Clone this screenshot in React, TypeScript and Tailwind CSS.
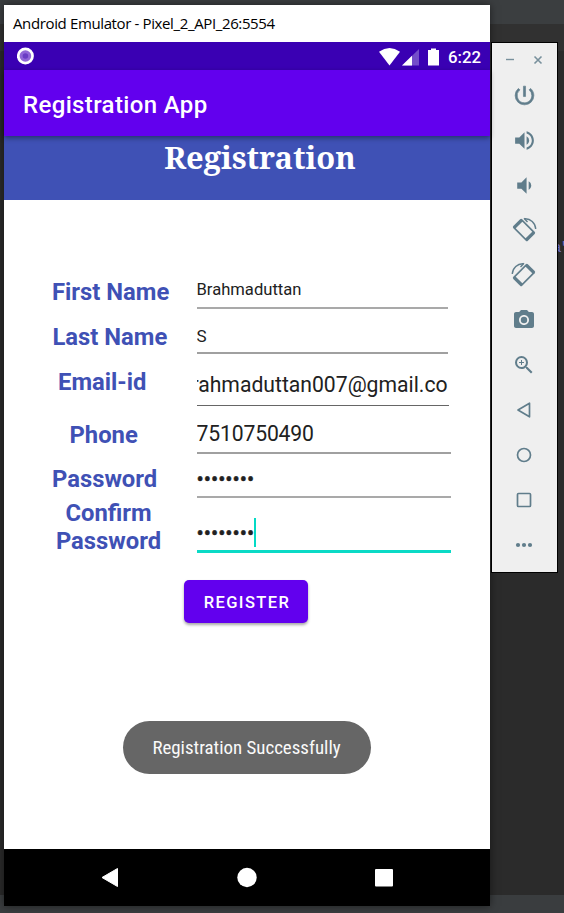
import type { ReactNode } from "react";
import {
  MdPowerSettingsNew,
  MdVolumeUp,
  MdVolumeDown,
  MdCameraAlt,
  MdZoomIn,
} from "react-icons/md";

const BULLETS = "••••••••";

function StatusBar() {
  return (
    <div className="flex h-7 items-center bg-[#3a00b3] pr-[9px] pl-[13px] text-white">
      <svg width="18" height="18" viewBox="0 0 18 18">
        <circle cx="8.400" cy="9" r="8.500" fill="#fff" />
        <circle cx="8.400" cy="9" r="5.800" fill="#9166d8" />
        <circle cx="8.400" cy="9" r="2.800" fill="#6a3cc4" />
      </svg>
      <svg width="62" height="20" viewBox="0 0 62 20" className="mt-px ml-auto">
        <path d="M0 4.8Q10.5 -2.6 21 4.8L10.5 18.5Z" fill="#fff" />
        <path d="M40 2V18.5H23Z" fill="#744dca" />
        <path d="M33 8.8V18.5H23Z" fill="#fff" />
        <path d="M49 3h3V1.5h5V3h3v15.500h-11Z" fill="#fff" />
      </svg>
      <span className="mt-px ml-[7px] w-[33px] text-[16.800px] leading-5 font-medium whitespace-nowrap">
        6:22
      </span>
    </div>
  );
}

type RowProps = {
  row: string;
  label: string;
  labelClass: string;
  line: string;
  children: ReactNode;
};

function Row({ row, label, labelClass, line, children }: RowProps) {
  return (
    <div className={`flex ${row}`}>
      <div className="w-[192.500px] shrink-0">
        <div className={`text-[23.800px] leading-7 font-bold text-[#3f51b5] ${labelClass}`}>{label}</div>
      </div>
      <div className={`flex overflow-hidden whitespace-nowrap text-[#212121] leading-7 ${line}`}>
        {children}
      </div>
    </div>
  );
}

function RotateIcon({ flip = false }: { flip?: boolean }) {
  return (
    <svg width="26" height="26" viewBox="-13 -13 26 26" className={flip ? "-scale-x-100" : ""}>
      <g transform="rotate(45)">
        <rect x="-10.300" y="-6.300" width="20.600" height="12.600" rx="1.500" fill="#607d8b" />
        <rect x="-7" y="-4.700" width="14" height="9.400" fill="#efefef" />
      </g>
      <path d="M0.500 -11.200C6.500 -11.700 11.400 -7 11.700 -1" fill="none" stroke="#607d8b" strokeWidth="1.400" />
      <path d="M0 -11.700L3.500 -8" fill="none" stroke="#607d8b" strokeWidth="1.400" />
    </svg>
  );
}

function Toolbar() {
  const icons: ReactNode[] = [
    <MdPowerSettingsNew size={25} className="stroke-[#607d8b] stroke-[0.6] [&>path:first-child]:stroke-none" />,
    <MdVolumeUp size={25} />,
    <MdVolumeDown size={25} />,
    <RotateIcon />,
    <RotateIcon flip />,
    <MdCameraAlt size={24} />,
    <MdZoomIn size={24} />,
    <svg width="24" height="24" viewBox="0 0 24 24" fill="none" stroke="currentColor" strokeWidth="1.700">
      <path d="M17.500 5.200V18.800L6 12Z" strokeLinejoin="round" />
    </svg>,
    <svg width="24" height="24" viewBox="0 0 24 24" fill="none" stroke="currentColor" strokeWidth="1.700">
      <circle cx="12" cy="12" r="6.500" />
    </svg>,
    <svg width="24" height="24" viewBox="0 0 24 24" fill="none" stroke="currentColor" strokeWidth="1.700">
      <rect x="5.500" y="5.500" width="13" height="13" rx="1" />
    </svg>,
    <svg width="24" height="24" viewBox="0 0 24 24" fill="currentColor">
      <circle cx="6" cy="12" r="2.100" />
      <circle cx="12" cy="12" r="2.100" />
      <circle cx="18" cy="12" r="2.100" />
    </svg>,
  ];
  return (
    <div className="mt-[37px] ml-px flex h-[531px] w-[67px] shrink-0 flex-col items-center border border-black bg-[#efefef] text-[#607d8b]">
      <div className="flex h-[29.500px] w-full shrink-0 items-center pt-[5px]">
        <svg width="65" height="12" viewBox="0 0 65 12" fill="none" stroke="#78909c">
          <path d="M14 5.500H22" strokeWidth="1.400" />
          <path d="M42.500 2.500L49.500 9.500M49.500 2.500L42.500 9.500" strokeWidth="1.600" />
        </svg>
      </div>
      {icons.map((icon, i) => (
        <div key={i} className="flex h-[45px] w-full shrink-0 items-center justify-center pr-px">
          {icon}
        </div>
      ))}
    </div>
  );
}

export default function App() {
  return (
    <div className="relative h-[913px] w-[564px] overflow-hidden bg-[#2b2b2b] font-['Roboto',sans-serif]">
      <div className="absolute inset-x-0 top-0 h-6 bg-[#3b3e40]" />
      <div className="absolute inset-x-0 top-6 h-[27px] bg-[#313131]" />
      <div className="absolute inset-x-0 bottom-0 h-[18px] bg-[#3a3d3f]" />
      <div className="absolute top-[240px] left-[553px] font-['Liberation_Mono',monospace] text-[14px] leading-4 tracking-[-2px] text-[#6f6fc4]">
        a'
      </div>

      <div className="relative flex pt-[5px] pl-1">
        <div className="flex h-[901px] w-[486px] shrink-0 flex-col bg-white shadow-[0_0_8px_rgba(0,0,0,0.5)]">
          <div className="h-[37px] shrink-0 bg-white pl-[9px] font-['Open_Sans',sans-serif] text-[15px] leading-[37px] tracking-[-0.370px] whitespace-nowrap text-black">
            Android Emulator - Pixel_2_API_26:5554
          </div>
          <StatusBar />
          <div className="relative z-10 h-[66px] shrink-0 bg-[#6200ee] pl-[19px] text-[24px] leading-[70px] font-medium tracking-[0.360px] text-white shadow-[0_2px_5px_rgba(0,0,0,0.4)]">
            Registration App
          </div>
          <div className="flex h-16 shrink-0 justify-center bg-[#3f51b5] pl-[26px]">
            <span className="mt-[3px] h-9 font-['Noto_Serif','DejaVu_Serif_Condensed','DejaVu_Serif',serif] text-[30.800px] leading-9 font-bold whitespace-nowrap text-white">
              Registration
            </span>
          </div>

          <div className="flex h-[649px] shrink-0 flex-col pt-16">
            <Row row="h-[45px]" label="First Name" labelClass="pt-3.5 pl-12" line="w-[251px] border-b-2 border-[#a9a9a9] pt-[12px] text-[16.600px]">
              Brahmaduttan
            </Row>
            <Row row="h-[45px]" label="Last Name" labelClass="pt-3.5 pl-[48.500px]" line="w-[251px] border-b-2 border-[#a0a0a0] pt-[12.500px] text-[17px]">
              S
            </Row>
            <Row row="h-[52px]" label="Email-id" labelClass="pt-3.5 pl-[54px]" line="w-[252px] justify-end border-b border-[#666] pt-[17px] pr-px text-[21.150px]">
              Brahmaduttan007@gmail.co
            </Row>
            <Row row="h-12" label="Phone" labelClass="pt-[15px] pl-[65.500px]" line="w-[254px] border-b-2 border-[#a0a0a0] pt-3.5 text-[21.150px] tracking-[-0.150px]">
              7510750490
            </Row>
            <Row row="h-11" label="Password" labelClass="pt-[11px] pl-12" line="w-[254px] border-b-2 border-[#a9a9a9] pt-3 text-[21.400px]">
              <span className="[-webkit-text-stroke:0.500px_#212121]">{BULLETS}</span>
            </Row>
            <Row row="h-[55px]" label="Confirm Password" labelClass="ml-[39.500px] w-[130px] pt-px text-center" line="w-[254px] border-b-[3px] border-[#0bdac6] pt-[22px] text-[21.400px]">
              <span className="[-webkit-text-stroke:0.500px_#212121]">{BULLETS}</span>
              <span className="-mt-[2px] h-[29px] w-[2px] bg-[#03dac5]" />
            </Row>

            <button className="mt-[27px] ml-[180px] h-[43px] w-[124px] shrink-0 rounded-[5px] bg-[#6200ee] pt-[3px] pl-[2px] text-[16.500px] font-medium tracking-[1.400px] text-white shadow-[0_2px_3px_rgba(0,0,0,0.35)]">
              REGISTER
            </button>

            <div className="mt-[98px] ml-[119px] flex h-[53px] w-[248px] shrink-0 items-center justify-center rounded-full bg-[#666] pt-[2px] pr-px">
              <span className="font-['Roboto_Condensed','Roboto',sans-serif] text-[18.900px] whitespace-nowrap text-[#fafafa]">
                Registration Successfully
              </span>
            </div>
          </div>

          <div className="flex h-[57px] shrink-0 items-center bg-black">
            <svg width="486" height="57" viewBox="0 0 486 57" fill="#fff">
              <path d="M98 28.500L113.500 19.500V37.500Z" stroke="#fff" strokeWidth="1" strokeLinejoin="round" />
              <circle cx="243" cy="28.500" r="9.700" />
              <rect x="371" y="20" width="18" height="17.500" rx="1" />
            </svg>
          </div>
        </div>
        <Toolbar />
      </div>
    </div>
  );
}
